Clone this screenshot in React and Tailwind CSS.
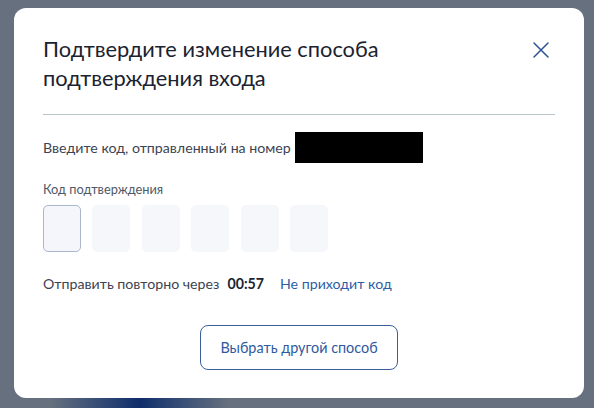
export default function App() {
  const cells = [0, 1, 2, 3, 4, 5];
  return (
    <div className="w-[594px] h-[408px] overflow-hidden bg-[#66707e] pt-[8px] pl-[14px] font-['Lato','Noto_Sans',sans-serif]">
      <div className="relative z-10 w-[570px] h-[390px] bg-white rounded-[12px] px-[29px] pt-[26px] pb-[28px] flex flex-col">
        <div className="flex items-start justify-between">
          <h1 className="text-[21.8px] leading-[29px] text-[#1b2330] font-normal w-[420px]">
            Подтвердите изменение способа подтверждения входа
          </h1>
          <button className="mt-[7px] mr-[5px] text-[#2b5296]" aria-label="Закрыть">
            <svg width="18" height="18" viewBox="0 0 18 18" fill="none" stroke="currentColor" strokeWidth="1.5" strokeLinecap="round">
              <path d="M2 2L16 16M16 2L2 16" />
            </svg>
          </button>
        </div>
        <div className="mt-[22px] h-px bg-[#b6c6ca]" />
        <div className="mt-[17px] flex items-center text-[14.2px] leading-[20px] text-[#3b4452]">
          <span>Введите код, отправленный на номер</span>
          <span className="inline-block w-[128px] h-[31px] bg-black ml-[4px]" />
        </div>
        <div className="mt-[17px] text-[12.8px] leading-[18px] text-[#4f5866]">Код подтверждения</div>
        <div className="mt-[7px] flex gap-[11.4px]">
          {cells.map((i) => (
            <div
              key={i}
              className={
                i === 0
                  ? "w-[38px] h-[47px] rounded-[5px] bg-[#f4f6fb] border border-[#a9b6cd]"
                  : "w-[38px] h-[47px] rounded-[5px] bg-[#f5f7fa]"
              }
            />
          ))}
        </div>
        <div className="mt-[22px] flex items-center text-[14.2px] leading-[20px]">
          <span className="text-[#3b4452]">Отправить повторно через</span>
          <span className="ml-[8px] font-bold text-[#1b2330]">00:57</span>
          <a className="ml-[16px] text-[#2d5ea6]">Не приходит код</a>
        </div>
        <div className="mt-auto flex justify-center">
          <button className="w-[198px] h-[45px] rounded-[8px] border border-[#3a5f99] text-[14.4px] text-[#2f5a9e]">
            Выбрать другой способ
          </button>
        </div>
      </div>
      <div className="flex h-[10px]">
        <div className="ml-[36px] w-[178px] h-full bg-gradient-to-r from-[#66707e] via-[#0f2d6b] to-[#66707e]" />
      </div>
    </div>
  );
}
